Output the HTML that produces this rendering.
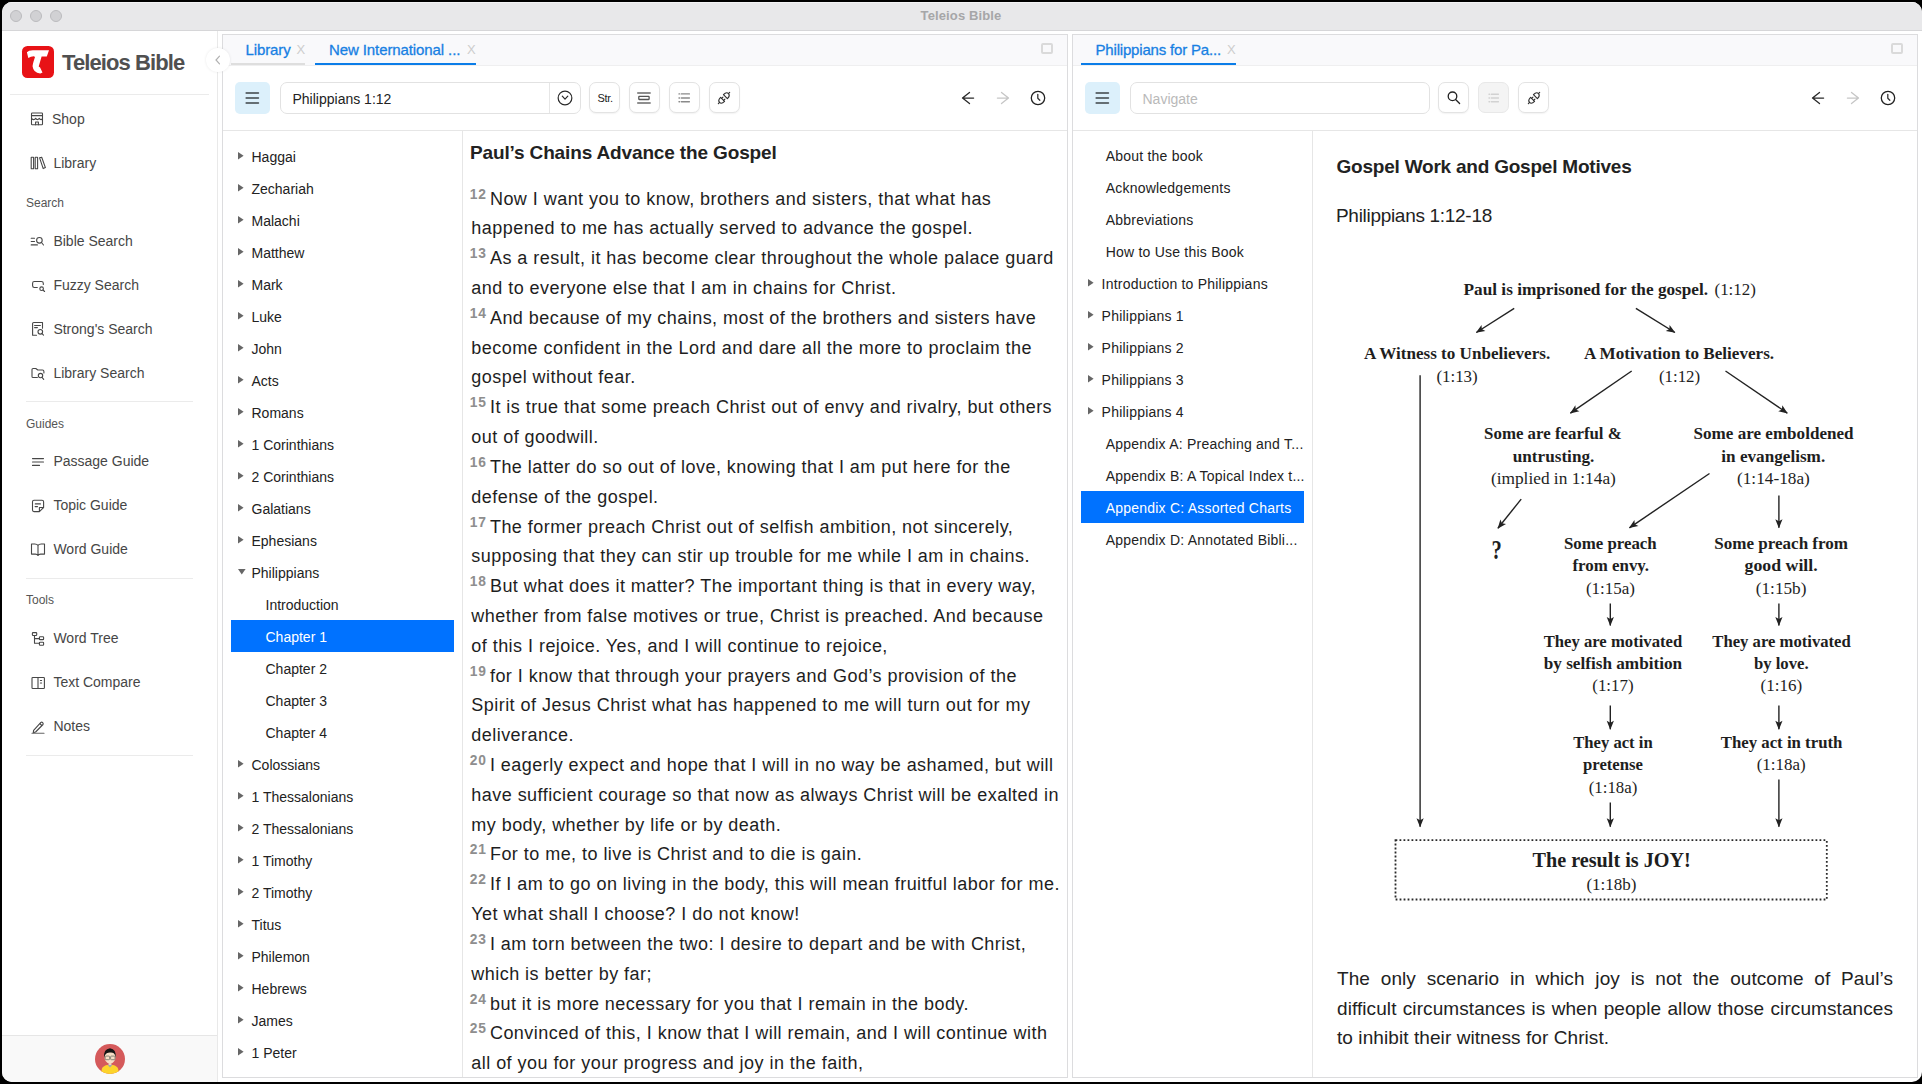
<!DOCTYPE html>
<html><head><meta charset="utf-8"><style>
*{box-sizing:border-box;margin:0;padding:0}
html,body{width:1922px;height:1084px;overflow:hidden;background:#000}
body{font-family:"Liberation Sans",sans-serif;color:#222;position:relative}
.a{position:absolute}
svg.a{overflow:visible}
#win{position:absolute;left:0;top:0;width:1922px;height:1084px;clip-path:inset(2px 0 2px 2px round 10px);background:#fff}
.tl{position:absolute;top:10px;width:12px;height:12px;border-radius:50%;background:#d1d1d4;border:1px solid #bbbbbe}
.nav{position:absolute;left:53.4px;font-size:14px;color:#464646;line-height:16px;white-space:nowrap}
.sh{position:absolute;left:26px;font-size:12px;color:#555;line-height:14px}
.sep{position:absolute;left:26px;width:167px;height:1px;background:#ebebeb}
.panel{position:absolute;border:1px solid #dcdcde;background:#fff}
.tabt{position:absolute;font-size:15px;line-height:18px;color:#1780e3;white-space:nowrap;letter-spacing:-0.1px;-webkit-text-stroke:0.3px #1780e3}
.tabx{position:absolute;font-size:13px;line-height:18px;color:#cdcdcd}
.maxi{position:absolute;width:12px;height:11px;border:2px solid #dadada;border-radius:2px}
.btn{position:absolute;width:31px;height:31px;border:1px solid #e3e3e3;border-radius:7px;background:#fff;box-shadow:0 1px 1.5px rgba(0,0,0,.05)}
.ham{position:absolute;width:35px;height:32px;border-radius:5px;background:#dcf0fb}
.inp{position:absolute;height:32px;border:1px solid #e2e2e2;border-radius:7px;background:#fff}
.row{position:absolute;height:32px;line-height:32px;white-space:nowrap;font-size:14px;color:#222}
.tri{position:absolute;width:6px;height:8px}
.trid{position:absolute;width:8px;height:6px}
.sel{background:#0072ff}
</style></head><body>
<div id="win">
<div class="a" style="left:0;top:0;width:1922px;height:31px;background:#e8e8ea;border-bottom:1px solid #d6d6d8"></div>
<div class="a" style="left:0;top:2px;width:1922px;height:1px;background:#f3f3f5"></div>
<div class="tl" style="left:10px"></div>
<div class="tl" style="left:30px"></div>
<div class="tl" style="left:50px"></div>
<div class="a" style="left:0;width:1922px;top:8px;text-align:center;font:700 13px/15px 'Liberation Sans',sans-serif;color:#a6a6a8;letter-spacing:0.12px">Teleios Bible</div>
<div class="a" style="left:217px;top:31px;width:1px;height:1053px;background:#e9e9e9"></div>
<div class="a" style="left:22px;top:46px;width:32px;height:32px;border-radius:5.5px;background:#e81216"></div>
<svg class="a" style="left:22px;top:46px" width="32" height="32" viewBox="0 0 32 32" ><path d="M4.9 6.3 Q6.5 4.3 10.8 4.3 L27 4.3 L24.8 10.4 L19.6 10.6 L16.7 20.4 L18.1 21.5 L20.5 26.6 Q19.5 27.5 18.1 27.4 Q11.5 27 10.6 20.5 Q10.4 18.9 13 11.1 L11.9 10.2 Q8.8 10.3 6.3 11.9 Z" fill="#fff"/></svg>
<div class="a" style="left:62px;top:50px;font:700 22px/26px 'Liberation Sans',sans-serif;color:#505050;letter-spacing:-0.9px;white-space:nowrap">Teleios Bible</div>
<div class="sep" style="left:10px;width:199px;top:94px"></div>
<div class="nav" style="top:110.8px;left:52px">Shop</div>
<svg class="a" style="left:26px;top:106px" width="24" height="24" viewBox="0 0 24 24" fill="none" stroke="#474747" stroke-width="1.1" stroke-linecap="round" stroke-linejoin="round"><rect x="5.5" y="7" width="11" height="11.7" rx="0.8"/><path d="M5.5 9.6 H16.5"/><path d="M5.5 12 Q6 13.6 7.6 13.6 Q9.2 13.6 9.7 12.2 Q10.4 13.6 11.5 13.6 Q12.8 13.6 13.2 12.2 Q13.8 13.6 15.2 13.6 Q16.5 13.4 16.5 12"/><path d="M9.6 18.7 V16 H12.4 V18.7"/></svg>
<div class="nav" style="top:154.8px">Library</div>
<svg class="a" style="left:26px;top:150px" width="24" height="24" viewBox="0 0 24 24" fill="none" stroke="#474747" stroke-width="1.1" stroke-linecap="round" stroke-linejoin="round"><rect x="5.2" y="7.2" width="2.4" height="11.5" rx="0.3"/><rect x="9.2" y="7.2" width="2.4" height="11.5" rx="0.3"/><path d="M13.6 7.8 L15.7 7.2 L19.4 17.6 L17.2 18.6 Z"/></svg>
<div class="nav" style="top:232.8px">Bible Search</div>
<svg class="a" style="left:26px;top:230px" width="24" height="24" viewBox="0 0 24 24" fill="none" stroke="#474747" stroke-width="1.1" stroke-linecap="round" stroke-linejoin="round"><path d="M5.2 8.3 H8.5 M5.2 11.5 H8.5 M5.2 14.9 H11.4"/><circle cx="13.4" cy="10.3" r="2.8"/><path d="M15.5 12.5 L17.5 15"/></svg>
<div class="nav" style="top:276.8px">Fuzzy Search</div>
<svg class="a" style="left:26px;top:274px" width="24" height="24" viewBox="0 0 24 24" fill="none" stroke="#474747" stroke-width="1.1" stroke-linecap="round" stroke-linejoin="round"><path d="M11.3 13.5 H8.3 Q6.6 13.5 6.6 11.8 V9.3 Q6.6 7.5 8.3 7.5 H15.3 Q17.3 7.5 17.3 9.3 V10.4"/><circle cx="15.6" cy="14.7" r="1.8"/><path d="M17 16 L18.6 17.5"/></svg>
<div class="nav" style="top:320.8px">Strong's Search</div>
<svg class="a" style="left:26px;top:318px" width="24" height="24" viewBox="0 0 24 24" fill="none" stroke="#474747" stroke-width="1.1" stroke-linecap="round" stroke-linejoin="round"><path d="M10.5 17.2 H6.6 V5.6 Q6.6 4.5 7.7 4.5 H16.5 V10.3"/><path d="M8.6 7.5 H14.4 M8.6 9.6 H11.4"/><circle cx="14.3" cy="13.8" r="2.3"/><path d="M16 15.6 L17.5 17.2"/></svg>
<div class="nav" style="top:364.8px">Library Search</div>
<svg class="a" style="left:26px;top:362px" width="24" height="24" viewBox="0 0 24 24" fill="none" stroke="#474747" stroke-width="1.1" stroke-linecap="round" stroke-linejoin="round"><path d="M11.4 15.5 H7.1 Q6 15.5 6 14.4 V7.6 Q6 6.5 7.1 6.5 H9.8 L11.8 8 H16.5 Q17.9 8 17.9 9.5 V11"/><circle cx="14.5" cy="13.6" r="2.2"/><path d="M16 15.4 L17.7 17.3"/></svg>
<div class="nav" style="top:453.3px">Passage Guide</div>
<svg class="a" style="left:26px;top:450px" width="24" height="24" viewBox="0 0 24 24" fill="none" stroke="#474747" stroke-width="1.1" stroke-linecap="round" stroke-linejoin="round"><path d="M6.5 8.6 H17.5 M6.5 12 H17.5 M6.5 15.4 H13.5"/></svg>
<div class="nav" style="top:497.3px">Topic Guide</div>
<svg class="a" style="left:26px;top:494px" width="24" height="24" viewBox="0 0 24 24" fill="none" stroke="#474747" stroke-width="1.1" stroke-linecap="round" stroke-linejoin="round"><path d="M13.4 17.6 H8 Q6.5 17.6 6.5 16.1 V7.7 Q6.5 6.3 8 6.3 H16 Q17.6 6.3 17.6 7.7 V13.5 L13.4 17.6 V13.5 H17.6"/><path d="M9.3 9.9 H14.4 M9.1 12.6 H11.5"/></svg>
<div class="nav" style="top:541.3px">Word Guide</div>
<svg class="a" style="left:26px;top:538px" width="24" height="24" viewBox="0 0 24 24" fill="none" stroke="#474747" stroke-width="1.1" stroke-linecap="round" stroke-linejoin="round"><path d="M12 7.3 Q11 6 8.8 6 H5.5 V16.1 H9.4 Q11.2 16.1 12 17.4 Q12.8 16.1 14.6 16.1 H18.5 V6 H15.2 Q13 6 12 7.3 Z M12 7.3 V17.4"/></svg>
<div class="nav" style="top:630.3px">Word Tree</div>
<svg class="a" style="left:26px;top:627px" width="24" height="24" viewBox="0 0 24 24" fill="none" stroke="#474747" stroke-width="1.1" stroke-linecap="round" stroke-linejoin="round"><rect x="6.4" y="5.6" width="4.3" height="2.9" rx="0.7"/><path d="M8.5 8.5 V16.3 H13.4 M8.5 11.6 H13.4"/><rect x="13.4" y="9.8" width="4.2" height="2.8" rx="0.7"/><rect x="13.4" y="15.2" width="4.2" height="3" rx="0.7"/></svg>
<div class="nav" style="top:674.3px">Text Compare</div>
<svg class="a" style="left:26px;top:671px" width="24" height="24" viewBox="0 0 24 24" fill="none" stroke="#474747" stroke-width="1.1" stroke-linecap="round" stroke-linejoin="round"><rect x="6" y="6.5" width="12.4" height="11" rx="0.8"/><path d="M12 6.5 V17.5 M14.4 9.5 H15.6 M14.4 12 H15.6"/></svg>
<div class="nav" style="top:718.3px">Notes</div>
<svg class="a" style="left:26px;top:715px" width="24" height="24" viewBox="0 0 24 24" fill="none" stroke="#474747" stroke-width="1.1" stroke-linecap="round" stroke-linejoin="round"><path d="M7.6 15.3 L7.3 17.6 L9.6 17 L17 9.5 Q17.5 8.5 16.7 7.6 Q15.8 6.8 14.9 7.4 Z M13.8 8.5 L15.9 10.6"/><path d="M6 18.3 H18" stroke="#666"/></svg>
<div class="sh" style="top:195.70000000000002px">Search</div>
<div class="sh" style="top:416.7px">Guides</div>
<div class="sh" style="top:593.4px">Tools</div>
<div class="sep" style="top:401px"></div>
<div class="sep" style="top:578px"></div>
<div class="sep" style="top:755px"></div>
<div class="a" style="left:0;top:1035px;width:217px;height:49px;background:#f9f9f9;border-top:1px solid #e6e6e6"></div>
<svg class="a" style="left:95px;top:1044px" width="30" height="30" viewBox="0 0 30 30">
<clipPath id="avc"><circle cx="15" cy="15" r="15"/></clipPath>
<circle cx="15" cy="15" r="15" fill="#d55a5b"/>
<g clip-path="url(#avc)">
<path d="M5.5 31 L7 24.5 Q8 22 12 21 L18 21 Q22 22 23 24.5 L24.5 31 Z" fill="#fdd42c"/>
<path d="M12.5 20.8 L15 23.5 L17.5 20.8 Z" fill="#9aa6b0"/>
<rect x="13.6" y="17.5" width="2.8" height="3.6" fill="#f0d3b8"/>
<path d="M9.4 11 Q9.4 19.6 15 19.6 Q20.6 19.6 20.6 11 Q20.6 8 15 8 Q9.4 8 9.4 11 Z" fill="#f6ddc5"/>
<path d="M9 14 Q8.2 5 15 4.2 Q21.5 5 20.8 14 L20.1 11.5 Q19.3 8.3 15.5 8.6 Q11.2 8.3 9.9 11.5 Z" fill="#141414"/>
<rect x="10.2" y="12.1" width="4.4" height="3.6" rx="0.8" fill="none" stroke="#7d7d72" stroke-width="0.9"/>
<rect x="15.6" y="12.1" width="4.4" height="3.6" rx="0.8" fill="none" stroke="#7d7d72" stroke-width="0.9"/>
</g></svg>
<div class="panel" style="left:222px;top:34px;width:846px;height:1044px"></div>
<div class="a" style="left:223px;top:35px;width:844px;height:31px;background:#f9f9fb;border-bottom:1px solid #efeff0"></div>
<div class="a" style="left:223px;top:130px;width:844px;height:1px;background:#e6e6e6"></div>
<div class="a" style="left:462px;top:131px;width:1px;height:946px;background:#e6e6e6"></div>
<div class="maxi" style="left:1041px;top:43px"></div>
<div class="ham" style="left:235px;top:82px"></div>
<svg class="a" style="left:235px;top:82px" width="35" height="32" viewBox="0 0 35 32" ><path d="M11.2 11 H23.4 M11.2 16 H23.4 M11.2 21 H23.4" stroke="#3d4347" stroke-width="1.65" stroke-linecap="round"/></svg>
<svg class="a" style="left:954px;top:84px" width="28" height="28" viewBox="0 0 28 28" ><path d="M15.5 8.4 L8.5 14.1 L15.5 19.6 M8.7 14.1 H19.6" fill="none" stroke="#2a2a2a" stroke-width="1.3" stroke-linecap="round" stroke-linejoin="round"/></svg>
<svg class="a" style="left:989px;top:84px" width="28" height="28" viewBox="0 0 28 28" ><path d="M12.5 8.4 L19.5 14.1 L12.5 19.6 M19.3 14.1 H8.4" fill="none" stroke="#c6c6c6" stroke-width="1.3" stroke-linecap="round" stroke-linejoin="round"/></svg>
<svg class="a" style="left:1024px;top:84px" width="28" height="28" viewBox="0 0 28 28" ><circle cx="14" cy="14" r="6.7" fill="none" stroke="#222" stroke-width="1.3"/><path d="M13.8 10.3 V14.3 L15.8 16.3" fill="none" stroke="#333" stroke-width="1.3" stroke-linecap="round" stroke-linejoin="round"/></svg>
<div class="panel" style="left:1072px;top:34px;width:846px;height:1044px"></div>
<div class="a" style="left:1073px;top:35px;width:844px;height:31px;background:#f9f9fb;border-bottom:1px solid #efeff0"></div>
<div class="a" style="left:1073px;top:130px;width:844px;height:1px;background:#e6e6e6"></div>
<div class="a" style="left:1312px;top:131px;width:1px;height:946px;background:#e6e6e6"></div>
<div class="maxi" style="left:1891px;top:43px"></div>
<div class="ham" style="left:1085px;top:82px"></div>
<svg class="a" style="left:1085px;top:82px" width="35" height="32" viewBox="0 0 35 32" ><path d="M11.2 11 H23.4 M11.2 16 H23.4 M11.2 21 H23.4" stroke="#3d4347" stroke-width="1.65" stroke-linecap="round"/></svg>
<svg class="a" style="left:1804px;top:84px" width="28" height="28" viewBox="0 0 28 28" ><path d="M15.5 8.4 L8.5 14.1 L15.5 19.6 M8.7 14.1 H19.6" fill="none" stroke="#2a2a2a" stroke-width="1.3" stroke-linecap="round" stroke-linejoin="round"/></svg>
<svg class="a" style="left:1839px;top:84px" width="28" height="28" viewBox="0 0 28 28" ><path d="M12.5 8.4 L19.5 14.1 L12.5 19.6 M19.3 14.1 H8.4" fill="none" stroke="#c6c6c6" stroke-width="1.3" stroke-linecap="round" stroke-linejoin="round"/></svg>
<svg class="a" style="left:1874px;top:84px" width="28" height="28" viewBox="0 0 28 28" ><circle cx="14" cy="14" r="6.7" fill="none" stroke="#222" stroke-width="1.3"/><path d="M13.8 10.3 V14.3 L15.8 16.3" fill="none" stroke="#333" stroke-width="1.3" stroke-linecap="round" stroke-linejoin="round"/></svg>
<div class="a" style="left:231px;top:63px;width:74px;height:2px;background:#dedede"></div>
<div class="a" style="left:315px;top:63px;width:161px;height:2px;background:#0b7de8"></div>
<div class="tabt" style="left:245.5px;top:41px">Library</div><div class="tabx" style="left:296.5px;top:41px">X</div>
<div class="tabt" style="left:329px;top:41px">New International ...</div><div class="tabx" style="left:467px;top:41px">X</div>
<div class="a" style="left:1081px;top:63px;width:155px;height:2px;background:#0b7de8"></div>
<div class="tabt" style="left:1095.5px;top:41px;letter-spacing:-0.18px">Philippians for Pa...</div><div class="tabx" style="left:1227px;top:41px">X</div>
<div class="inp" style="left:280px;top:82px;width:301px"></div>
<div class="a" style="left:549px;top:83px;width:1px;height:30px;background:#e6e6e6"></div>
<div class="a" style="left:292.5px;top:91px;font-size:14px;line-height:16px;color:#222;white-space:nowrap">Philippians 1:12</div>
<svg class="a" style="left:552px;top:84px" width="28" height="28" viewBox="0 0 28 28" ><circle cx="13" cy="14" r="6.85" fill="none" stroke="#2a2a2a" stroke-width="1.2"/><path d="M10.3 12.1 L13 15.2 L15.8 12.1" fill="none" stroke="#2a2a2a" stroke-width="1.2" stroke-linecap="round" stroke-linejoin="round"/></svg>
<div class="btn" style="left:589px;top:82px"></div>
<div class="btn" style="left:629px;top:82px"></div>
<div class="btn" style="left:669px;top:82px"></div>
<div class="btn" style="left:709px;top:82px"></div>
<div class="a" style="left:597.5px;top:92px;font-size:11px;line-height:12px;color:#222;letter-spacing:-0.3px">Str.</div>
<svg class="a" style="left:630px;top:84px" width="28" height="28" viewBox="0 0 28 28" ><path d="M7.2 8.9 H20.7 M7.2 18.9 H20.7" stroke="#6a6a6a" stroke-width="1.5"/><rect x="8.8" y="12.4" width="10.3" height="3.1" rx="0.5" fill="none" stroke="#555" stroke-width="1.3"/></svg>
<svg class="a" style="left:670px;top:84px" width="28" height="28" viewBox="0 0 28 28" ><path d="M9 9.9 H9.6 M9 14 H9.6 M9 17.8 H9.6 M11.4 9.9 H19.4 M11.4 14 H19.4 M11.4 17.8 H19.4" stroke="#8a8a8a" stroke-width="1.4" stroke-linecap="round"/></svg>
<svg class="a" style="left:710px;top:84px" width="28" height="28" viewBox="0 0 28 28" ><g transform="rotate(-45 14 14)" fill="none" stroke="#2e2e2e" stroke-width="1.15" stroke-linecap="round" stroke-linejoin="round"><path d="M6 14 H7.7 M20.3 14 H22"/><path d="M12 11.2 V16.8 Q7.7 16.8 7.7 14 Q7.7 11.2 12 11.2 Z"/><path d="M12 12.6 H13.9 M12 15.4 H13.9"/><path d="M16 11.2 V16.8 Q20.3 16.8 20.3 14 Q20.3 11.2 16 11.2 Z"/></g></svg>
<div class="inp" style="left:1130px;top:82px;width:300px"></div>
<div class="a" style="left:1142.5px;top:91px;font-size:14px;line-height:16px;color:#b9b9b9;white-space:nowrap">Navigate</div>
<div class="btn" style="left:1438px;top:82px"></div>
<div class="btn" style="left:1478px;top:82px;background:#f4f4f4;border-color:#e8e8e8;box-shadow:none"></div>
<div class="btn" style="left:1518px;top:82px"></div>
<svg class="a" style="left:1440px;top:84px" width="28" height="28" viewBox="0 0 28 28" ><circle cx="12.5" cy="12.3" r="4.3" fill="none" stroke="#222" stroke-width="1.3"/><path d="M15.6 15.5 L19.6 19.5" stroke="#222" stroke-width="1.3" stroke-linecap="round"/></svg>
<svg class="a" style="left:1480px;top:84px" width="28" height="28" viewBox="0 0 28 28" ><path d="M9 10.3 H9.6 M9 14 H9.6 M9 17.8 H9.6 M11.4 10.3 H18.4 M11.4 14 H18.4 M11.4 17.8 H18.4" stroke="#d2d2d2" stroke-width="1.4" stroke-linecap="round"/></svg>
<svg class="a" style="left:1520px;top:84px" width="28" height="28" viewBox="0 0 28 28" ><g transform="rotate(-45 14 14)" fill="none" stroke="#2e2e2e" stroke-width="1.15" stroke-linecap="round" stroke-linejoin="round"><path d="M6 14 H7.7 M20.3 14 H22"/><path d="M12 11.2 V16.8 Q7.7 16.8 7.7 14 Q7.7 11.2 12 11.2 Z"/><path d="M12 12.6 H13.9 M12 15.4 H13.9"/><path d="M16 11.2 V16.8 Q20.3 16.8 20.3 14 Q20.3 11.2 16 11.2 Z"/></g></svg>
<div class="a" style="left:206px;top:48px;width:24px;height:24px;border-radius:50%;background:#fff;box-shadow:0 0 3px rgba(0,0,0,0.09)"></div>
<svg class="a" style="left:206px;top:48px" width="24" height="24" viewBox="0 0 24 24" ><path d="M13.5 8.2 L10 12 L13.5 15.8" fill="none" stroke="#b0b0b0" stroke-width="1.2" stroke-linecap="round"/></svg>
<svg class="tri a" style="left:238.2px;top:152.4px" width="6" height="8"><path d="M0 0 L5.6 3.7 L0 7.4 Z" fill="#666"/></svg>
<div class="row" style="left:251.5px;top:141.0px">Haggai</div>
<svg class="tri a" style="left:238.2px;top:184.4px" width="6" height="8"><path d="M0 0 L5.6 3.7 L0 7.4 Z" fill="#666"/></svg>
<div class="row" style="left:251.5px;top:173.0px">Zechariah</div>
<svg class="tri a" style="left:238.2px;top:216.4px" width="6" height="8"><path d="M0 0 L5.6 3.7 L0 7.4 Z" fill="#666"/></svg>
<div class="row" style="left:251.5px;top:205.0px">Malachi</div>
<svg class="tri a" style="left:238.2px;top:248.4px" width="6" height="8"><path d="M0 0 L5.6 3.7 L0 7.4 Z" fill="#666"/></svg>
<div class="row" style="left:251.5px;top:237.0px">Matthew</div>
<svg class="tri a" style="left:238.2px;top:280.4px" width="6" height="8"><path d="M0 0 L5.6 3.7 L0 7.4 Z" fill="#666"/></svg>
<div class="row" style="left:251.5px;top:269.0px">Mark</div>
<svg class="tri a" style="left:238.2px;top:312.4px" width="6" height="8"><path d="M0 0 L5.6 3.7 L0 7.4 Z" fill="#666"/></svg>
<div class="row" style="left:251.5px;top:301.0px">Luke</div>
<svg class="tri a" style="left:238.2px;top:344.4px" width="6" height="8"><path d="M0 0 L5.6 3.7 L0 7.4 Z" fill="#666"/></svg>
<div class="row" style="left:251.5px;top:333.0px">John</div>
<svg class="tri a" style="left:238.2px;top:376.4px" width="6" height="8"><path d="M0 0 L5.6 3.7 L0 7.4 Z" fill="#666"/></svg>
<div class="row" style="left:251.5px;top:365.0px">Acts</div>
<svg class="tri a" style="left:238.2px;top:408.4px" width="6" height="8"><path d="M0 0 L5.6 3.7 L0 7.4 Z" fill="#666"/></svg>
<div class="row" style="left:251.5px;top:397.0px">Romans</div>
<svg class="tri a" style="left:238.2px;top:440.4px" width="6" height="8"><path d="M0 0 L5.6 3.7 L0 7.4 Z" fill="#666"/></svg>
<div class="row" style="left:251.5px;top:429.0px">1 Corinthians</div>
<svg class="tri a" style="left:238.2px;top:472.4px" width="6" height="8"><path d="M0 0 L5.6 3.7 L0 7.4 Z" fill="#666"/></svg>
<div class="row" style="left:251.5px;top:461.0px">2 Corinthians</div>
<svg class="tri a" style="left:238.2px;top:504.4px" width="6" height="8"><path d="M0 0 L5.6 3.7 L0 7.4 Z" fill="#666"/></svg>
<div class="row" style="left:251.5px;top:493.0px">Galatians</div>
<svg class="tri a" style="left:238.2px;top:536.4px" width="6" height="8"><path d="M0 0 L5.6 3.7 L0 7.4 Z" fill="#666"/></svg>
<div class="row" style="left:251.5px;top:525.0px">Ephesians</div>
<svg class="trid a" style="left:237.5px;top:569.4px" width="8" height="6"><path d="M0 0 L7.6 0 L3.8 5.4 Z" fill="#666"/></svg>
<div class="row" style="left:251.5px;top:557.0px">Philippians</div>
<div class="row" style="left:265.5px;top:589.0px">Introduction</div>
<div class="a sel" style="left:231px;top:620px;width:223px;height:32px"></div>
<div class="row" style="left:265.5px;top:621.0px;color:#fff">Chapter 1</div>
<div class="row" style="left:265.5px;top:653.0px">Chapter 2</div>
<div class="row" style="left:265.5px;top:685.0px">Chapter 3</div>
<div class="row" style="left:265.5px;top:717.0px">Chapter 4</div>
<svg class="tri a" style="left:238.2px;top:760.4px" width="6" height="8"><path d="M0 0 L5.6 3.7 L0 7.4 Z" fill="#666"/></svg>
<div class="row" style="left:251.5px;top:749.0px">Colossians</div>
<svg class="tri a" style="left:238.2px;top:792.4px" width="6" height="8"><path d="M0 0 L5.6 3.7 L0 7.4 Z" fill="#666"/></svg>
<div class="row" style="left:251.5px;top:781.0px">1 Thessalonians</div>
<svg class="tri a" style="left:238.2px;top:824.4px" width="6" height="8"><path d="M0 0 L5.6 3.7 L0 7.4 Z" fill="#666"/></svg>
<div class="row" style="left:251.5px;top:813.0px">2 Thessalonians</div>
<svg class="tri a" style="left:238.2px;top:856.4px" width="6" height="8"><path d="M0 0 L5.6 3.7 L0 7.4 Z" fill="#666"/></svg>
<div class="row" style="left:251.5px;top:845.0px">1 Timothy</div>
<svg class="tri a" style="left:238.2px;top:888.4px" width="6" height="8"><path d="M0 0 L5.6 3.7 L0 7.4 Z" fill="#666"/></svg>
<div class="row" style="left:251.5px;top:877.0px">2 Timothy</div>
<svg class="tri a" style="left:238.2px;top:920.4px" width="6" height="8"><path d="M0 0 L5.6 3.7 L0 7.4 Z" fill="#666"/></svg>
<div class="row" style="left:251.5px;top:909.0px">Titus</div>
<svg class="tri a" style="left:238.2px;top:952.4px" width="6" height="8"><path d="M0 0 L5.6 3.7 L0 7.4 Z" fill="#666"/></svg>
<div class="row" style="left:251.5px;top:941.0px">Philemon</div>
<svg class="tri a" style="left:238.2px;top:984.4px" width="6" height="8"><path d="M0 0 L5.6 3.7 L0 7.4 Z" fill="#666"/></svg>
<div class="row" style="left:251.5px;top:973.0px">Hebrews</div>
<svg class="tri a" style="left:238.2px;top:1016.4px" width="6" height="8"><path d="M0 0 L5.6 3.7 L0 7.4 Z" fill="#666"/></svg>
<div class="row" style="left:251.5px;top:1005.0px">James</div>
<svg class="tri a" style="left:238.2px;top:1048.4px" width="6" height="8"><path d="M0 0 L5.6 3.7 L0 7.4 Z" fill="#666"/></svg>
<div class="row" style="left:251.5px;top:1037.0px">1 Peter</div>
<div class="row" style="left:1105.7px;top:140.0px;letter-spacing:0.22px">About the book</div>
<div class="row" style="left:1105.7px;top:172.0px;letter-spacing:0.22px">Acknowledgements</div>
<div class="row" style="left:1105.7px;top:204.0px;letter-spacing:0.22px">Abbreviations</div>
<div class="row" style="left:1105.7px;top:236.0px;letter-spacing:0.22px">How to Use this Book</div>
<svg class="tri a" style="left:1088.1px;top:279px" width="6" height="8"><path d="M0 0 L5.6 3.7 L0 7.4 Z" fill="#666"/></svg>
<div class="row" style="left:1101.6px;top:268.0px;letter-spacing:0.22px">Introduction to Philippians</div>
<svg class="tri a" style="left:1088.1px;top:311px" width="6" height="8"><path d="M0 0 L5.6 3.7 L0 7.4 Z" fill="#666"/></svg>
<div class="row" style="left:1101.6px;top:300.0px;letter-spacing:0.22px">Philippians 1</div>
<svg class="tri a" style="left:1088.1px;top:343px" width="6" height="8"><path d="M0 0 L5.6 3.7 L0 7.4 Z" fill="#666"/></svg>
<div class="row" style="left:1101.6px;top:332.0px;letter-spacing:0.22px">Philippians 2</div>
<svg class="tri a" style="left:1088.1px;top:375px" width="6" height="8"><path d="M0 0 L5.6 3.7 L0 7.4 Z" fill="#666"/></svg>
<div class="row" style="left:1101.6px;top:364.0px;letter-spacing:0.22px">Philippians 3</div>
<svg class="tri a" style="left:1088.1px;top:407px" width="6" height="8"><path d="M0 0 L5.6 3.7 L0 7.4 Z" fill="#666"/></svg>
<div class="row" style="left:1101.6px;top:396.0px;letter-spacing:0.22px">Philippians 4</div>
<div class="row" style="left:1105.7px;top:428.0px;letter-spacing:0.22px">Appendix A: Preaching and T...</div>
<div class="row" style="left:1105.7px;top:460.0px;letter-spacing:0.22px">Appendix B: A Topical Index t...</div>
<div class="a sel" style="left:1081px;top:491px;width:223px;height:32px"></div>
<div class="row" style="left:1105.7px;top:492.0px;color:#fff;letter-spacing:0.22px">Appendix C: Assorted Charts</div>
<div class="row" style="left:1105.7px;top:524.0px;letter-spacing:0.22px">Appendix D: Annotated Bibli...</div>
<div class="a" style="left:470px;top:142px;font:700 19px/22px 'Liberation Sans',sans-serif;letter-spacing:-0.14px;color:#222;white-space:nowrap">Paul’s Chains Advance the Gospel</div>
<style>.bib{position:absolute;left:471.3px;font-size:18px;line-height:29.82px;letter-spacing:0.46px;color:#1e1e1e;white-space:nowrap}.vn{display:inline;line-height:0;font-size:13.8px;font-weight:700;color:#8e8e8e;letter-spacing:0.7px;position:relative;top:-6px;margin-left:-1.5px;margin-right:3.4px}</style>
<div class="bib" style="top:184.6px"><span class="vn">12</span>Now I want you to know, brothers and sisters, that what has<br>happened to me has actually served to advance the gospel.<br><span class="vn">13</span>As a result, it has become clear throughout the whole palace guard<br>and to everyone else that I am in chains for Christ.<br><span class="vn">14</span>And because of my chains, most of the brothers and sisters have<br>become confident in the Lord and dare all the more to proclaim the<br>gospel without fear.<br><span class="vn">15</span>It is true that some preach Christ out of envy and rivalry, but others<br>out of goodwill.<br><span class="vn">16</span>The latter do so out of love, knowing that I am put here for the<br>defense of the gospel.<br><span class="vn">17</span>The former preach Christ out of selfish ambition, not sincerely,<br>supposing that they can stir up trouble for me while I am in chains.<br><span class="vn">18</span>But what does it matter? The important thing is that in every way,<br>whether from false motives or true, Christ is preached. And because<br>of this I rejoice. Yes, and I will continue to rejoice,<br><span class="vn">19</span>for I know that through your prayers and God’s provision of the<br>Spirit of Jesus Christ what has happened to me will turn out for my<br>deliverance.<br><span class="vn">20</span>I eagerly expect and hope that I will in no way be ashamed, but will<br>have sufficient courage so that now as always Christ will be exalted in<br>my body, whether by life or by death.<br><span class="vn">21</span>For to me, to live is Christ and to die is gain.<br><span class="vn">22</span>If I am to go on living in the body, this will mean fruitful labor for me.<br>Yet what shall I choose? I do not know!<br><span class="vn">23</span>I am torn between the two: I desire to depart and be with Christ,<br>which is better by far;<br><span class="vn">24</span>but it is more necessary for you that I remain in the body.<br><span class="vn">25</span>Convinced of this, I know that I will remain, and I will continue with<br>all of you for your progress and joy in the faith,</div>
<div class="a" style="left:1336.5px;top:156px;font:700 19px/22px 'Liberation Sans',sans-serif;letter-spacing:-0.22px;color:#222;white-space:nowrap">Gospel Work and Gospel Motives</div>
<div class="a" style="left:1336px;top:205px;font:400 19px/22px 'Liberation Sans',sans-serif;letter-spacing:-0.3px;color:#222;white-space:nowrap">Philippians 1:12-18</div>
<div class="a" style="left:1337px;top:964px;width:556px;font:400 19px/29.65px 'Liberation Sans',sans-serif;letter-spacing:0.08px;color:#222;text-align:justify;text-align-last:left">The only scenario in which joy is not the outcome of Paul’s difficult circumstances is when people allow those circumstances to inhibit their witness for Christ.</div>
<svg class="a" style="left:0;top:0" width="1922" height="1084" viewBox="0 0 1922 1084"><g font-family="Liberation Serif" fill="#1e1e1e"><text x="1463.6" y="295.1" font-size="17" font-weight="700" textLength="244.5" lengthAdjust="spacingAndGlyphs">Paul is imprisoned for the gospel.</text><text x="1714.5" y="295.1" font-size="17" font-weight="400" textLength="41.3" lengthAdjust="spacingAndGlyphs">(1:12)</text><text x="1363.9" y="358.9" font-size="17" font-weight="700" textLength="186.3" lengthAdjust="spacingAndGlyphs">A Witness to Unbelievers.</text><text x="1436.4" y="381.7" font-size="17" font-weight="400" textLength="41.3" lengthAdjust="spacingAndGlyphs">(1:13)</text><text x="1583.9" y="358.9" font-size="17" font-weight="700" textLength="190.2" lengthAdjust="spacingAndGlyphs">A Motivation to Believers.</text><text x="1658.9" y="381.7" font-size="17" font-weight="400" textLength="41.3" lengthAdjust="spacingAndGlyphs">(1:12)</text><text x="1484.1" y="439.0" font-size="17" font-weight="700" textLength="137.7" lengthAdjust="spacingAndGlyphs">Some are fearful &amp;</text><text x="1512.8" y="461.7" font-size="17" font-weight="700" textLength="81.5" lengthAdjust="spacingAndGlyphs">untrusting.</text><text x="1490.9" y="484.0" font-size="17" font-weight="400" textLength="125.0" lengthAdjust="spacingAndGlyphs">(implied in 1:14a)</text><text x="1693.5" y="439.0" font-size="17" font-weight="700" textLength="160.1" lengthAdjust="spacingAndGlyphs">Some are emboldened</text><text x="1721.3" y="461.7" font-size="17" font-weight="700" textLength="103.9" lengthAdjust="spacingAndGlyphs">in evangelism.</text><text x="1737.0" y="484.0" font-size="17" font-weight="400" textLength="72.8" lengthAdjust="spacingAndGlyphs">(1:14-18a)</text><text x="1491.5" y="558.7" font-size="28" font-weight="700" textLength="10.3" lengthAdjust="spacingAndGlyphs">?</text><text x="1563.9" y="548.8" font-size="17" font-weight="700" textLength="92.8" lengthAdjust="spacingAndGlyphs">Some preach</text><text x="1572.4" y="571.3" font-size="17" font-weight="700" textLength="76.7" lengthAdjust="spacingAndGlyphs">from envy.</text><text x="1585.9" y="593.8" font-size="17" font-weight="400" textLength="49.1" lengthAdjust="spacingAndGlyphs">(1:15a)</text><text x="1714.3" y="548.8" font-size="17" font-weight="700" textLength="133.7" lengthAdjust="spacingAndGlyphs">Some preach from</text><text x="1744.6" y="571.3" font-size="17" font-weight="700" textLength="73.1" lengthAdjust="spacingAndGlyphs">good will.</text><text x="1755.8" y="593.8" font-size="17" font-weight="400" textLength="50.6" lengthAdjust="spacingAndGlyphs">(1:15b)</text><text x="1543.7" y="647.2" font-size="17" font-weight="700" textLength="138.5" lengthAdjust="spacingAndGlyphs">They are motivated</text><text x="1543.7" y="668.8" font-size="17" font-weight="700" textLength="138.5" lengthAdjust="spacingAndGlyphs">by selfish ambition</text><text x="1592.3" y="691.3" font-size="17" font-weight="400" textLength="41.3" lengthAdjust="spacingAndGlyphs">(1:17)</text><text x="1712.3" y="647.2" font-size="17" font-weight="700" textLength="138.5" lengthAdjust="spacingAndGlyphs">They are motivated</text><text x="1753.9" y="668.8" font-size="17" font-weight="700" textLength="54.8" lengthAdjust="spacingAndGlyphs">by love.</text><text x="1760.6" y="691.3" font-size="17" font-weight="400" textLength="41.6" lengthAdjust="spacingAndGlyphs">(1:16)</text><text x="1573.2" y="748.4" font-size="17" font-weight="700" textLength="79.5" lengthAdjust="spacingAndGlyphs">They act in</text><text x="1583.0" y="770.1" font-size="17" font-weight="700" textLength="59.9" lengthAdjust="spacingAndGlyphs">pretense</text><text x="1588.7" y="792.6" font-size="17" font-weight="400" textLength="48.6" lengthAdjust="spacingAndGlyphs">(1:18a)</text><text x="1720.7" y="748.4" font-size="17" font-weight="700" textLength="121.7" lengthAdjust="spacingAndGlyphs">They act in truth</text><text x="1756.7" y="770.1" font-size="17" font-weight="400" textLength="48.9" lengthAdjust="spacingAndGlyphs">(1:18a)</text><text x="1532.5" y="867.0" font-size="21" font-weight="700" textLength="158.2" lengthAdjust="spacingAndGlyphs">The result is JOY!</text><text x="1586.4" y="890.0" font-size="17" font-weight="400" textLength="50.0" lengthAdjust="spacingAndGlyphs">(1:18b)</text></g><g stroke="#222" stroke-width="1.4" fill="none"><path d="M1514.2 308.3 L1476.3 332.5"/><path d="M1475.88 332.77 L1481.53 324.89 L1481.78 329.00 L1485.40 330.96 Z" fill="#222" stroke="none"/><path d="M1635.9 308.3 L1674.9 332.5"/><path d="M1675.32 332.76 L1665.78 331.08 L1669.38 329.07 L1669.58 324.96 Z" fill="#222" stroke="none"/><path d="M1420.1 375.2 L1420.1 826.8"/><path d="M1420.10 827.30 L1416.50 818.30 L1420.10 820.30 L1423.70 818.30 Z" fill="#222" stroke="none"/><path d="M1631.7 371 L1570.4 413.1"/><path d="M1569.99 413.38 L1575.37 405.32 L1575.76 409.42 L1579.44 411.26 Z" fill="#222" stroke="none"/><path d="M1725.5 371 L1787.3 413.1"/><path d="M1787.71 413.38 L1778.25 411.29 L1781.93 409.44 L1782.30 405.34 Z" fill="#222" stroke="none"/><path d="M1521.2 499.1 L1497.9 528.3"/><path d="M1497.59 528.69 L1500.39 519.41 L1501.95 523.22 L1506.02 523.90 Z" fill="#222" stroke="none"/><path d="M1709.5 473.5 L1629.4 527.8"/><path d="M1628.99 528.08 L1634.42 520.05 L1634.78 524.15 L1638.46 526.01 Z" fill="#222" stroke="none"/><path d="M1778.9 495.5 L1778.9 527.8"/><path d="M1778.90 528.30 L1775.30 519.30 L1778.90 521.30 L1782.50 519.30 Z" fill="#222" stroke="none"/><path d="M1610.3 603.6 L1610.3 625.5"/><path d="M1610.30 626.00 L1606.70 617.00 L1610.30 619.00 L1613.90 617.00 Z" fill="#222" stroke="none"/><path d="M1778.9 603.6 L1778.9 625.5"/><path d="M1778.90 626.00 L1775.30 617.00 L1778.90 619.00 L1782.50 617.00 Z" fill="#222" stroke="none"/><path d="M1610.3 705.5 L1610.3 729.3"/><path d="M1610.30 729.80 L1606.70 720.80 L1610.30 722.80 L1613.90 720.80 Z" fill="#222" stroke="none"/><path d="M1778.9 705.5 L1778.9 729.3"/><path d="M1778.90 729.80 L1775.30 720.80 L1778.90 722.80 L1782.50 720.80 Z" fill="#222" stroke="none"/><path d="M1610.3 802.4 L1610.3 826.8"/><path d="M1610.30 827.30 L1606.70 818.30 L1610.30 820.30 L1613.90 818.30 Z" fill="#222" stroke="none"/><path d="M1778.9 779.4 L1778.9 826.8"/><path d="M1778.90 827.30 L1775.30 818.30 L1778.90 820.30 L1782.50 818.30 Z" fill="#222" stroke="none"/></g><rect x="1395.5" y="840.2" width="431.3" height="59.3" fill="none" stroke="#2a2a2a" stroke-width="1.8" stroke-dasharray="1.8 2.2"/></svg>
</div>
</body></html>
